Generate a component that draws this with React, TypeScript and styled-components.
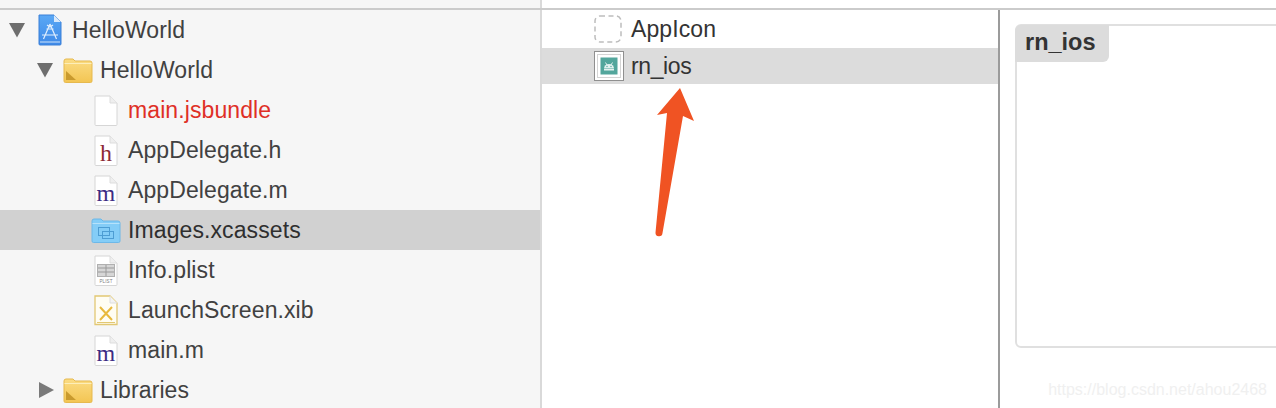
import React from "react";
import styled, { createGlobalStyle } from "styled-components";

const GlobalStyle = createGlobalStyle`
  html, body {
    margin: 0;
    padding: 0;
    background: #ffffff;
    overflow: hidden;
  }
  * {
    box-sizing: border-box;
  }
`;

const Window = styled.div`
  position: relative;
  display: flex;
  width: 1276px;
  height: 408px;
  overflow: hidden;
  padding-top: 10px;
  font-family: "Liberation Sans", Arial, sans-serif;
  font-size: 23px;
  letter-spacing: 0.1px;
  color: #414141;
  background: #ffffff;

  &::before {
    content: "";
    position: absolute;
    top: 8px;
    left: 0;
    right: 0;
    height: 2px;
    background: #cbcbcb;
  }
`;

const Navigator = styled.div`
  width: 542px;
  flex-shrink: 0;
  margin-top: -10px;
  padding-top: 10px;
  background: #f6f6f6;
  border-right: 2px solid #d9d9d9;
`;

const Row = styled.div<{ $depth: number; $selected?: boolean }>`
  display: flex;
  align-items: center;
  height: 40px;
  padding-left: ${(p) => 8 + p.$depth * 28}px;
  background: ${(p) => (p.$selected ? "#d1d1d1" : "transparent")};
  color: ${(p) => (p.$selected ? "#2f2f2f" : "inherit")};
`;

const Toggle = styled.span`
  display: flex;
  align-items: center;
  width: 24px;
  flex-shrink: 0;
`;

const IconSlot = styled.span`
  display: flex;
  justify-content: center;
  width: 40px;
  flex-shrink: 0;
  padding-right: 4px;
`;

const Label = styled.span<{ $missing?: boolean }>`
  color: ${(p) => (p.$missing ? "#df2f26" : "inherit")};
  white-space: nowrap;
`;

const AssetList = styled.div`
  width: 458px;
  flex-shrink: 0;
  border-right: 2px solid #9b9b9b;
`;

const AssetRow = styled.div<{ $selected?: boolean; $height: number }>`
  display: flex;
  align-items: center;
  gap: 7px;
  height: ${(p) => p.$height}px;
  padding-left: 52px;
  color: #333333;
  letter-spacing: ${(p) => (p.$selected ? "-0.4px" : "0.1px")};
  background: ${(p) => (p.$selected ? "#dcdcdc" : "transparent")};
`;

const AssetIcon = styled.span`
  display: flex;
  width: 30px;
  flex-shrink: 0;
`;

const Detail = styled.div`
  flex: 1;
  padding: 14px 0 0 15px;
`;

const SetBox = styled.div`
  height: 324px;
  margin-right: -8px;
  border: 2px solid #e0e0e0;
  border-radius: 6px;
`;

const SetTitle = styled.div`
  display: inline-block;
  margin: -1px 0 0 -2px;
  height: 37px;
  padding: 0 13px 0 10px;
  line-height: 35px;
  font-size: 23.5px;
  font-weight: 700;
  letter-spacing: 0;
  color: #333333;
  background: #dcdcdc;
  border-radius: 6px 0 6px 0;
`;

const Arrow = styled.svg`
  position: absolute;
  top: 80px;
  left: 650px;
`;

const Watermark = styled.span`
  position: absolute;
  right: 9px;
  top: 381px;
  font-size: 16px;
  letter-spacing: 0;
  color: #f0f0f0;
`;

const TriangleDown = () => (
  <svg width="18" height="16" viewBox="0 0 18 16">
    <path d="M1 1h16L9 15.500z" fill="#6e6e6e" />
  </svg>
);

const TriangleRight = () => (
  <svg width="18" height="18" viewBox="0 0 18 18">
    <path d="M3 1l15 8-15 8z" fill="#7a7a7a" />
  </svg>
);

const ProjectIcon = () => (
  <svg width="24" height="32" viewBox="0 0 24 32">
    <defs>
      <linearGradient id="projectFill" x1="0" y1="0" x2="0" y2="1">
        <stop offset="0" stopColor="#5aa8f5" />
        <stop offset="1" stopColor="#3f8ae8" />
      </linearGradient>
    </defs>
    <path d="M1 1h15l7 7v22a1 1 0 0 1-1 1H2a1 1 0 0 1-1-1z" fill="url(#projectFill)" stroke="#3a80d8" />
    <path d="M16 1v7h7z" fill="#d8e9fb" />
    <path d="M2 28h20" stroke="#cfe4fa" />
    <g stroke="#e2effd" strokeWidth="1.200" fill="none">
      <path d="M12 10L5.500 25M12 10l6.500 15M4 21h16M8.500 15h7M9 11l3 2 3-2" />
    </g>
  </svg>
);

const FolderIcon = () => (
  <svg width="30" height="25" viewBox="0 0 30 25">
    <defs>
      <linearGradient id="folderFill" x1="0" y1="0" x2="0" y2="1">
        <stop offset="0" stopColor="#fbdc84" />
        <stop offset="1" stopColor="#f3c553" />
      </linearGradient>
    </defs>
    <path d="M1 3a2 2 0 0 1 2-2h7l2 2h15a2 2 0 0 1 2 2v18a1.500 1.500 0 0 1-1.500 1.500h-25A1.500 1.500 0 0 1 1 23z" fill="url(#folderFill)" stroke="#e6b94e" />
    <path d="M1.500 5.500h27" stroke="#fdeeb8" />
    <path d="M3 22V13l10 9z" fill="#c99a2e" />
  </svg>
);

const Page = ({ children }: { children?: React.ReactNode }) => (
  <svg width="24" height="31" viewBox="0 0 24 31">
    <path d="M1 1h15l7 7v21.500a1 1 0 0 1-1 1H2a1 1 0 0 1-1-1z" fill="#ffffff" stroke="#d6d6d6" />
    <path d="M16 1v7h7" fill="#efefef" stroke="#dddddd" />
    {children}
  </svg>
);

const SourceIcon = ({ letter, color }: { letter: string; color: string }) => (
  <Page>
    <text x="12" y="26" textAnchor="middle" fontFamily="Liberation Serif" fontSize="24" fill={color}>
      {letter}
    </text>
  </Page>
);

const PlistIcon = () => (
  <Page>
    <rect x="3.500" y="9.500" width="17" height="12" fill="#d6d6d6" stroke="#b0b0b0" />
    <path d="M4 13h16M4 17h16M12 10v11" stroke="#9a9a9a" />
    <text x="12" y="28" textAnchor="middle" fontFamily="Liberation Sans" fontSize="4.500" fill="#7d7d7d">
      PLIST
    </text>
  </Page>
);

const XibIcon = () => (
  <svg width="24" height="31" viewBox="0 0 24 31">
    <path d="M1 1h15l7 7v21.500H1z" fill="#fffdf3" stroke="#e2c873" strokeWidth="1.300" />
    <path d="M16 1v7h7" fill="#f3f3f3" stroke="#dddddd" />
    <path d="M6 12l12 13M18 12L6 25" stroke="#e8b93f" strokeWidth="2" />
    <path d="M3 27.500h18" stroke="#e2c873" />
  </svg>
);

const AssetsIcon = () => (
  <svg width="30" height="25" viewBox="0 0 30 25">
    <path d="M1 3a2 2 0 0 1 2-2h7l2 2h15a2 2 0 0 1 2 2v18a1.500 1.500 0 0 1-1.500 1.500h-25A1.500 1.500 0 0 1 1 23z" fill="#84cdf7" stroke="#6db8e8" />
    <path d="M1.500 5.500h27" stroke="#b6e2fb" />
    <g fill="none" stroke="#4d9dd3">
      <rect x="7.500" y="9.500" width="11" height="8" />
      <rect x="11.500" y="13.500" width="11" height="7" />
    </g>
  </svg>
);

const EmptySetIcon = () => (
  <svg width="28" height="28" viewBox="0 0 28 28">
    <rect x="1" y="1" width="26" height="26" rx="5" fill="none" stroke="#bdbdbd" strokeWidth="1.500" strokeDasharray="5 3.500" />
  </svg>
);

const ImageSetIcon = () => (
  <svg width="30" height="30" viewBox="0 0 30 30">
    <rect x="0.500" y="0.500" width="29" height="29" fill="#ffffff" stroke="#8f8f8f" />
    <rect x="3.500" y="3.500" width="23" height="23" fill="none" stroke="#d4d4d4" />
    <rect x="6.500" y="6.500" width="17" height="17" fill="#53a69c" />
    <path d="M10 17.500a5 4.500 0 0 1 10 0z" fill="#e4f2f0" />
    <path d="M11.500 11.500l1.500 2.500M18.500 11.500l-1.500 2.500" stroke="#e4f2f0" />
    <circle cx="13" cy="15.500" r="0.700" fill="#53a69c" />
    <circle cx="17" cy="15.500" r="0.700" fill="#53a69c" />
    <rect x="10" y="18" width="10" height="1.500" fill="#e4f2f0" />
  </svg>
);

const files = [
  { name: "AppDelegate.h", icon: <SourceIcon letter="h" color="#8c2a35" /> },
  { name: "AppDelegate.m", icon: <SourceIcon letter="m" color="#3c2b84" /> },
];

const App = () => {
  return (
    <Window>
      <GlobalStyle />
      <Navigator>
        <Row $depth={0}>
          <Toggle><TriangleDown /></Toggle>
          <IconSlot><ProjectIcon /></IconSlot>
          <Label>HelloWorld</Label>
        </Row>
        <Row $depth={1}>
          <Toggle><TriangleDown /></Toggle>
          <IconSlot><FolderIcon /></IconSlot>
          <Label>HelloWorld</Label>
        </Row>
        <Row $depth={2}>
          <Toggle />
          <IconSlot><Page /></IconSlot>
          <Label $missing>main.jsbundle</Label>
        </Row>
        {files.map((file) => (
          <Row $depth={2} key={file.name}>
            <Toggle />
            <IconSlot>{file.icon}</IconSlot>
            <Label>{file.name}</Label>
          </Row>
        ))}
        <Row $depth={2} $selected>
          <Toggle />
          <IconSlot><AssetsIcon /></IconSlot>
          <Label>Images.xcassets</Label>
        </Row>
        <Row $depth={2}>
          <Toggle />
          <IconSlot><PlistIcon /></IconSlot>
          <Label>Info.plist</Label>
        </Row>
        <Row $depth={2}>
          <Toggle />
          <IconSlot><XibIcon /></IconSlot>
          <Label>LaunchScreen.xib</Label>
        </Row>
        <Row $depth={2}>
          <Toggle />
          <IconSlot><SourceIcon letter="m" color="#3c2b84" /></IconSlot>
          <Label>main.m</Label>
        </Row>
        <Row $depth={1}>
          <Toggle><TriangleRight /></Toggle>
          <IconSlot><FolderIcon /></IconSlot>
          <Label>Libraries</Label>
        </Row>
      </Navigator>
      <AssetList>
        <AssetRow $height={38}>
          <AssetIcon><EmptySetIcon /></AssetIcon>
          <Label>AppIcon</Label>
        </AssetRow>
        <AssetRow $height={36} $selected>
          <AssetIcon><ImageSetIcon /></AssetIcon>
          <Label>rn_ios</Label>
        </AssetRow>
      </AssetList>
      <Detail>
        <SetBox>
          <SetTitle>rn_ios</SetTitle>
        </SetBox>
      </Detail>
      <Arrow width="50" height="160" viewBox="650 80 50 160">
        <path
          d="M680 88L694 121L683 116L662.500 233a3.500 3.500 0 0 1-7-.5L667 113L657 115z"
          fill="#f05323"
        />
      </Arrow>
      <Watermark>https://blog.csdn.net/ahou2468</Watermark>
    </Window>
  );
};

export default App;
